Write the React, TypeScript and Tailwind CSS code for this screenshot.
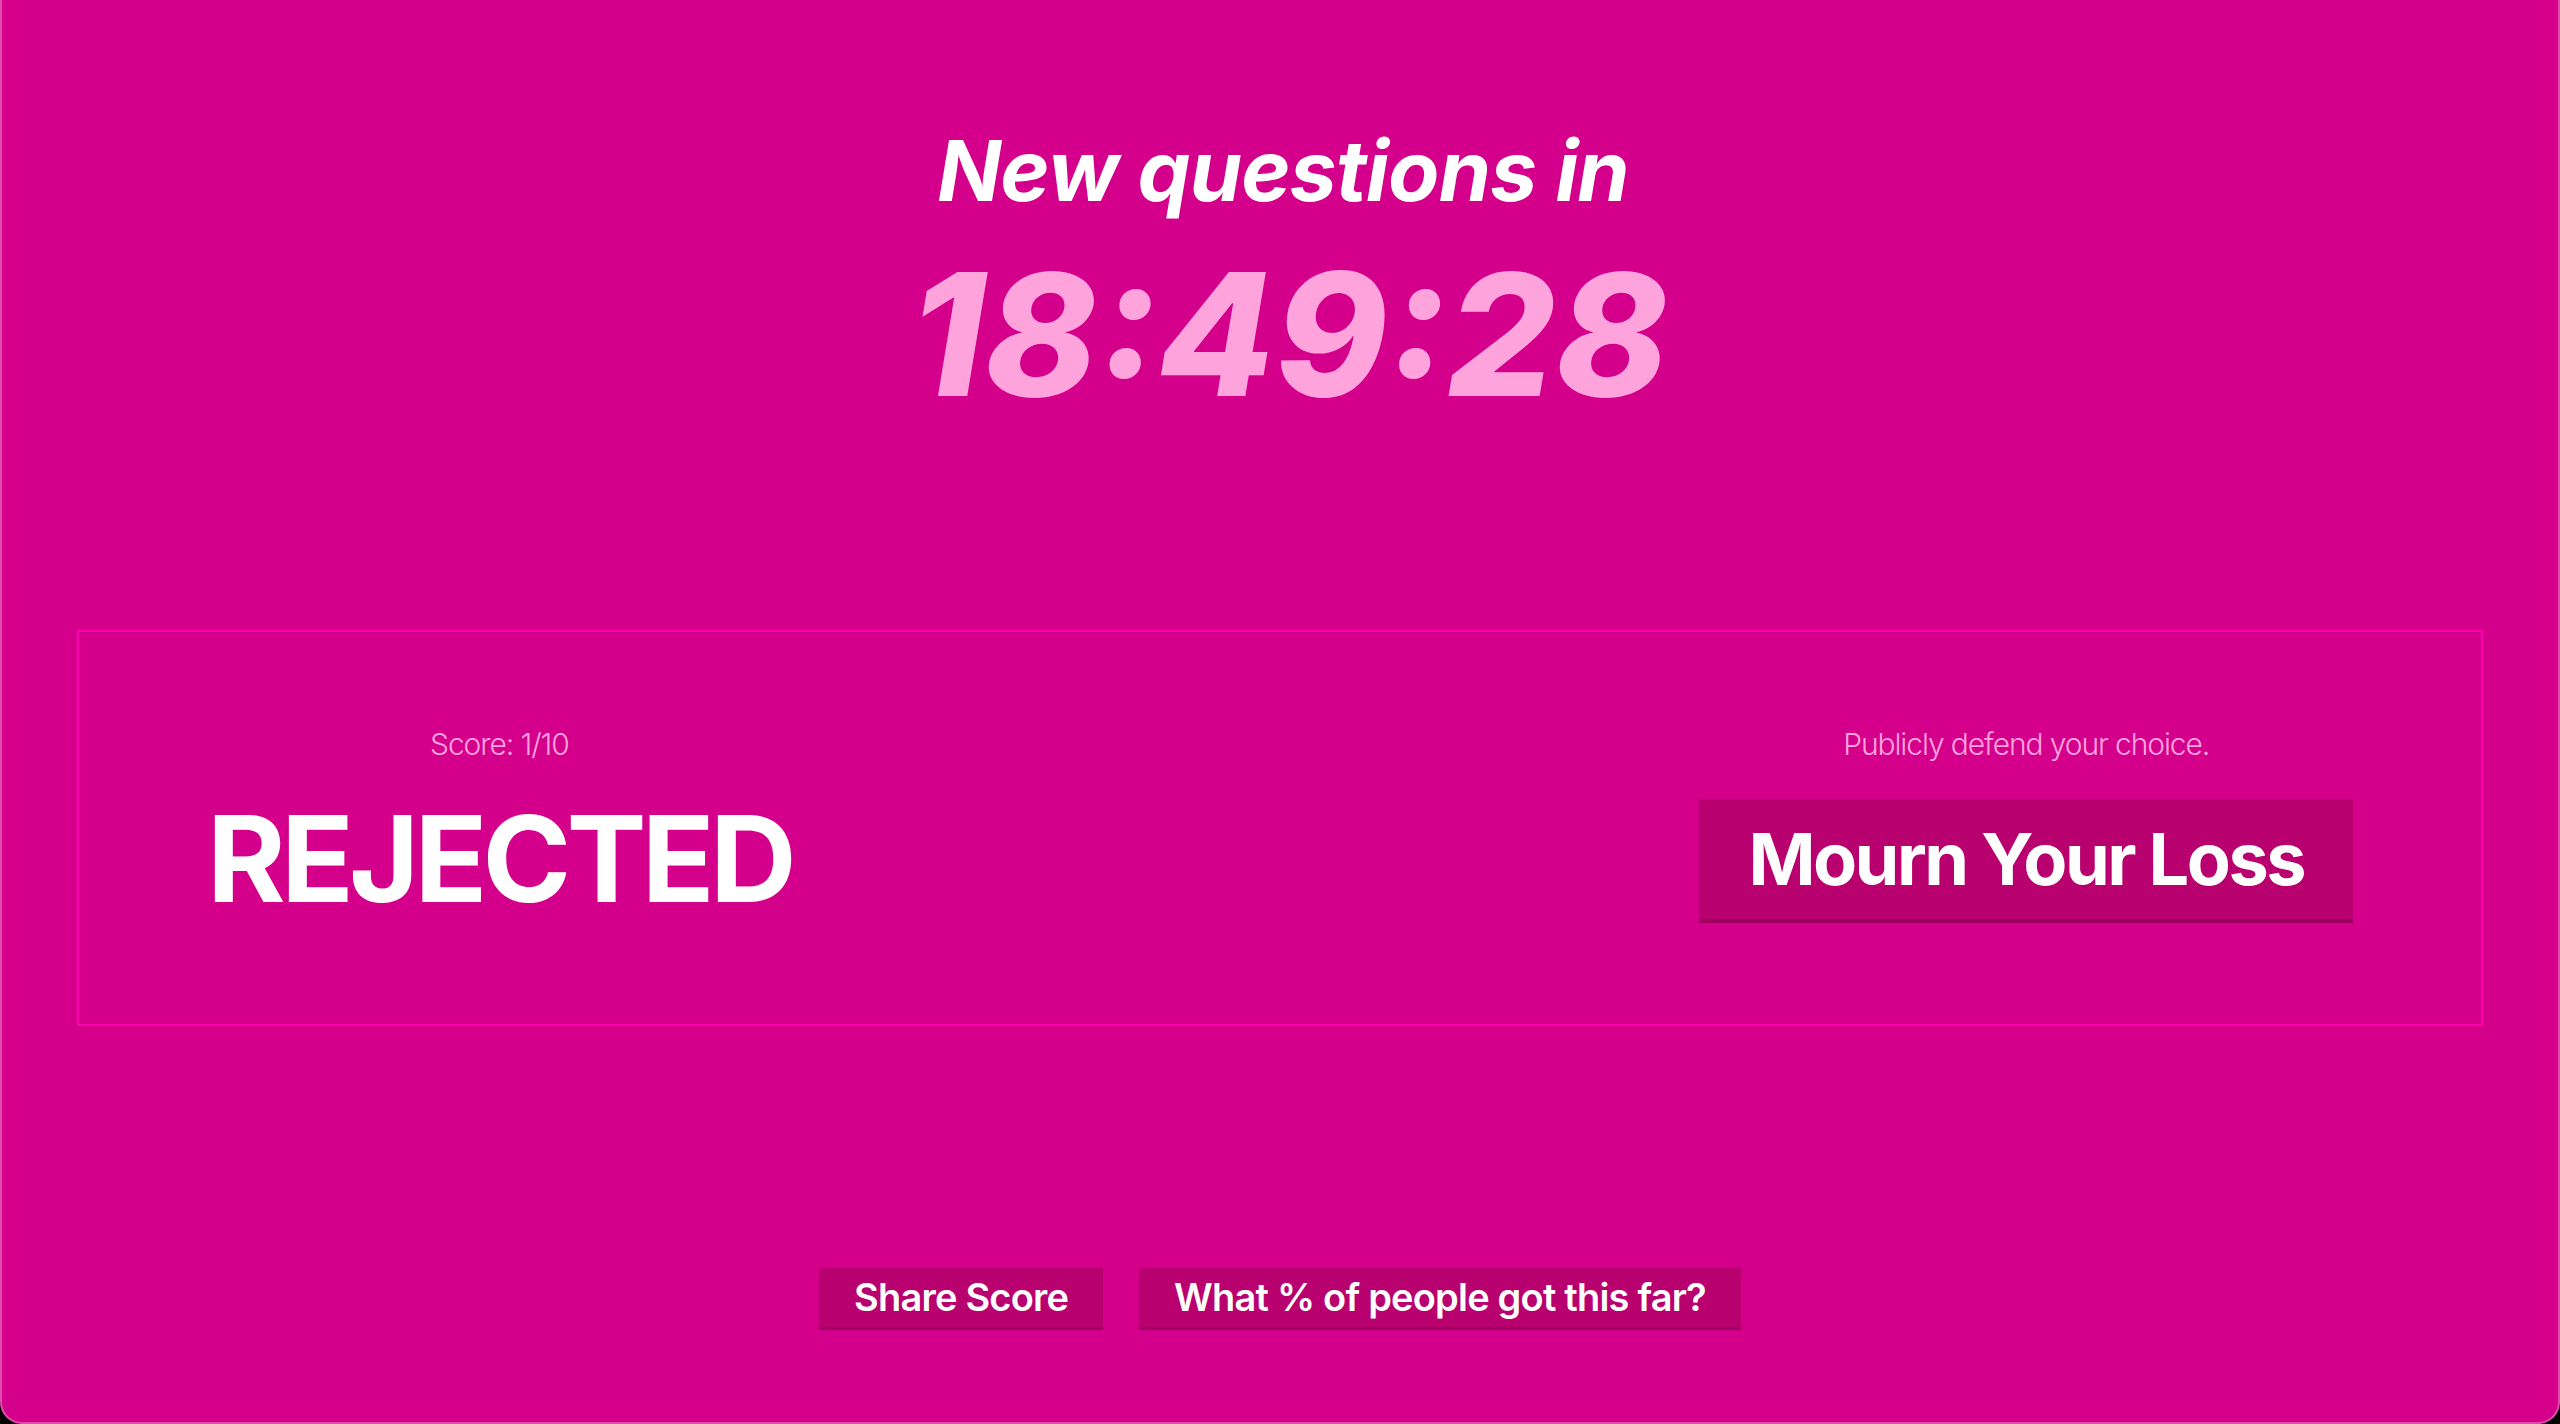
export default function App() {
  return (
    <div className="min-h-screen bg-black" style={{ fontFamily: "Inter, 'Noto Sans', sans-serif" }}>
      <div className="h-[1424px] bg-[#d4008b] rounded-b-[22px] border-x-2 border-b-2 border-[#e24bae] flex flex-col items-center">
        <h1 className="mt-[129px] ml-[6px] text-[84px] leading-none font-bold italic text-white tracking-[-0.01em]">
          New questions in
        </h1>
        <div className="mt-[36px] ml-[18px] text-[170px] leading-none font-extrabold italic text-[#ffa3dd]">
          18:49:28
        </div>

        <div className="mt-[211px] self-stretch mx-[75px] h-[396px] border-2 border-[#ff00b0] px-[128px] pt-[94px] flex items-start justify-between">
          <div className="flex flex-col items-center gap-[37px]">
            <p className="text-[30px] leading-[36px] font-light text-[#ffa3dd] tracking-[-1.1px]">Score: 1/10</p>
            <p className="text-[120px] leading-none font-bold text-white tracking-[-0.04em]">REJECTED</p>
          </div>
          <div className="flex flex-col items-center gap-[37px]">
            <p className="text-[30px] leading-[36px] font-light text-[#ffa3dd] tracking-[-1.1px]">
              Publicly defend your choice.
            </p>
            <button className="h-[124px] px-[49px] bg-[#b9006f] border-b-4 border-[#9c0061] text-[72px] font-bold text-white tracking-[-0.035em] flex items-center">
              Mourn Your Loss
            </button>
          </div>
        </div>

        <div className="mt-[242px] flex gap-[36px]">
          <button className="h-[62px] px-[35px] bg-[#b9006f] border-b-[3px] border-[#9c0061] text-[38px] font-semibold text-white tracking-[-0.8px] flex items-center">
            Share Score
          </button>
          <button className="h-[62px] px-[35px] bg-[#b9006f] border-b-[3px] border-[#9c0061] text-[38px] font-semibold text-white tracking-[-0.8px] flex items-center">
            What % of people got this far?
          </button>
        </div>
      </div>
    </div>
  );
}
